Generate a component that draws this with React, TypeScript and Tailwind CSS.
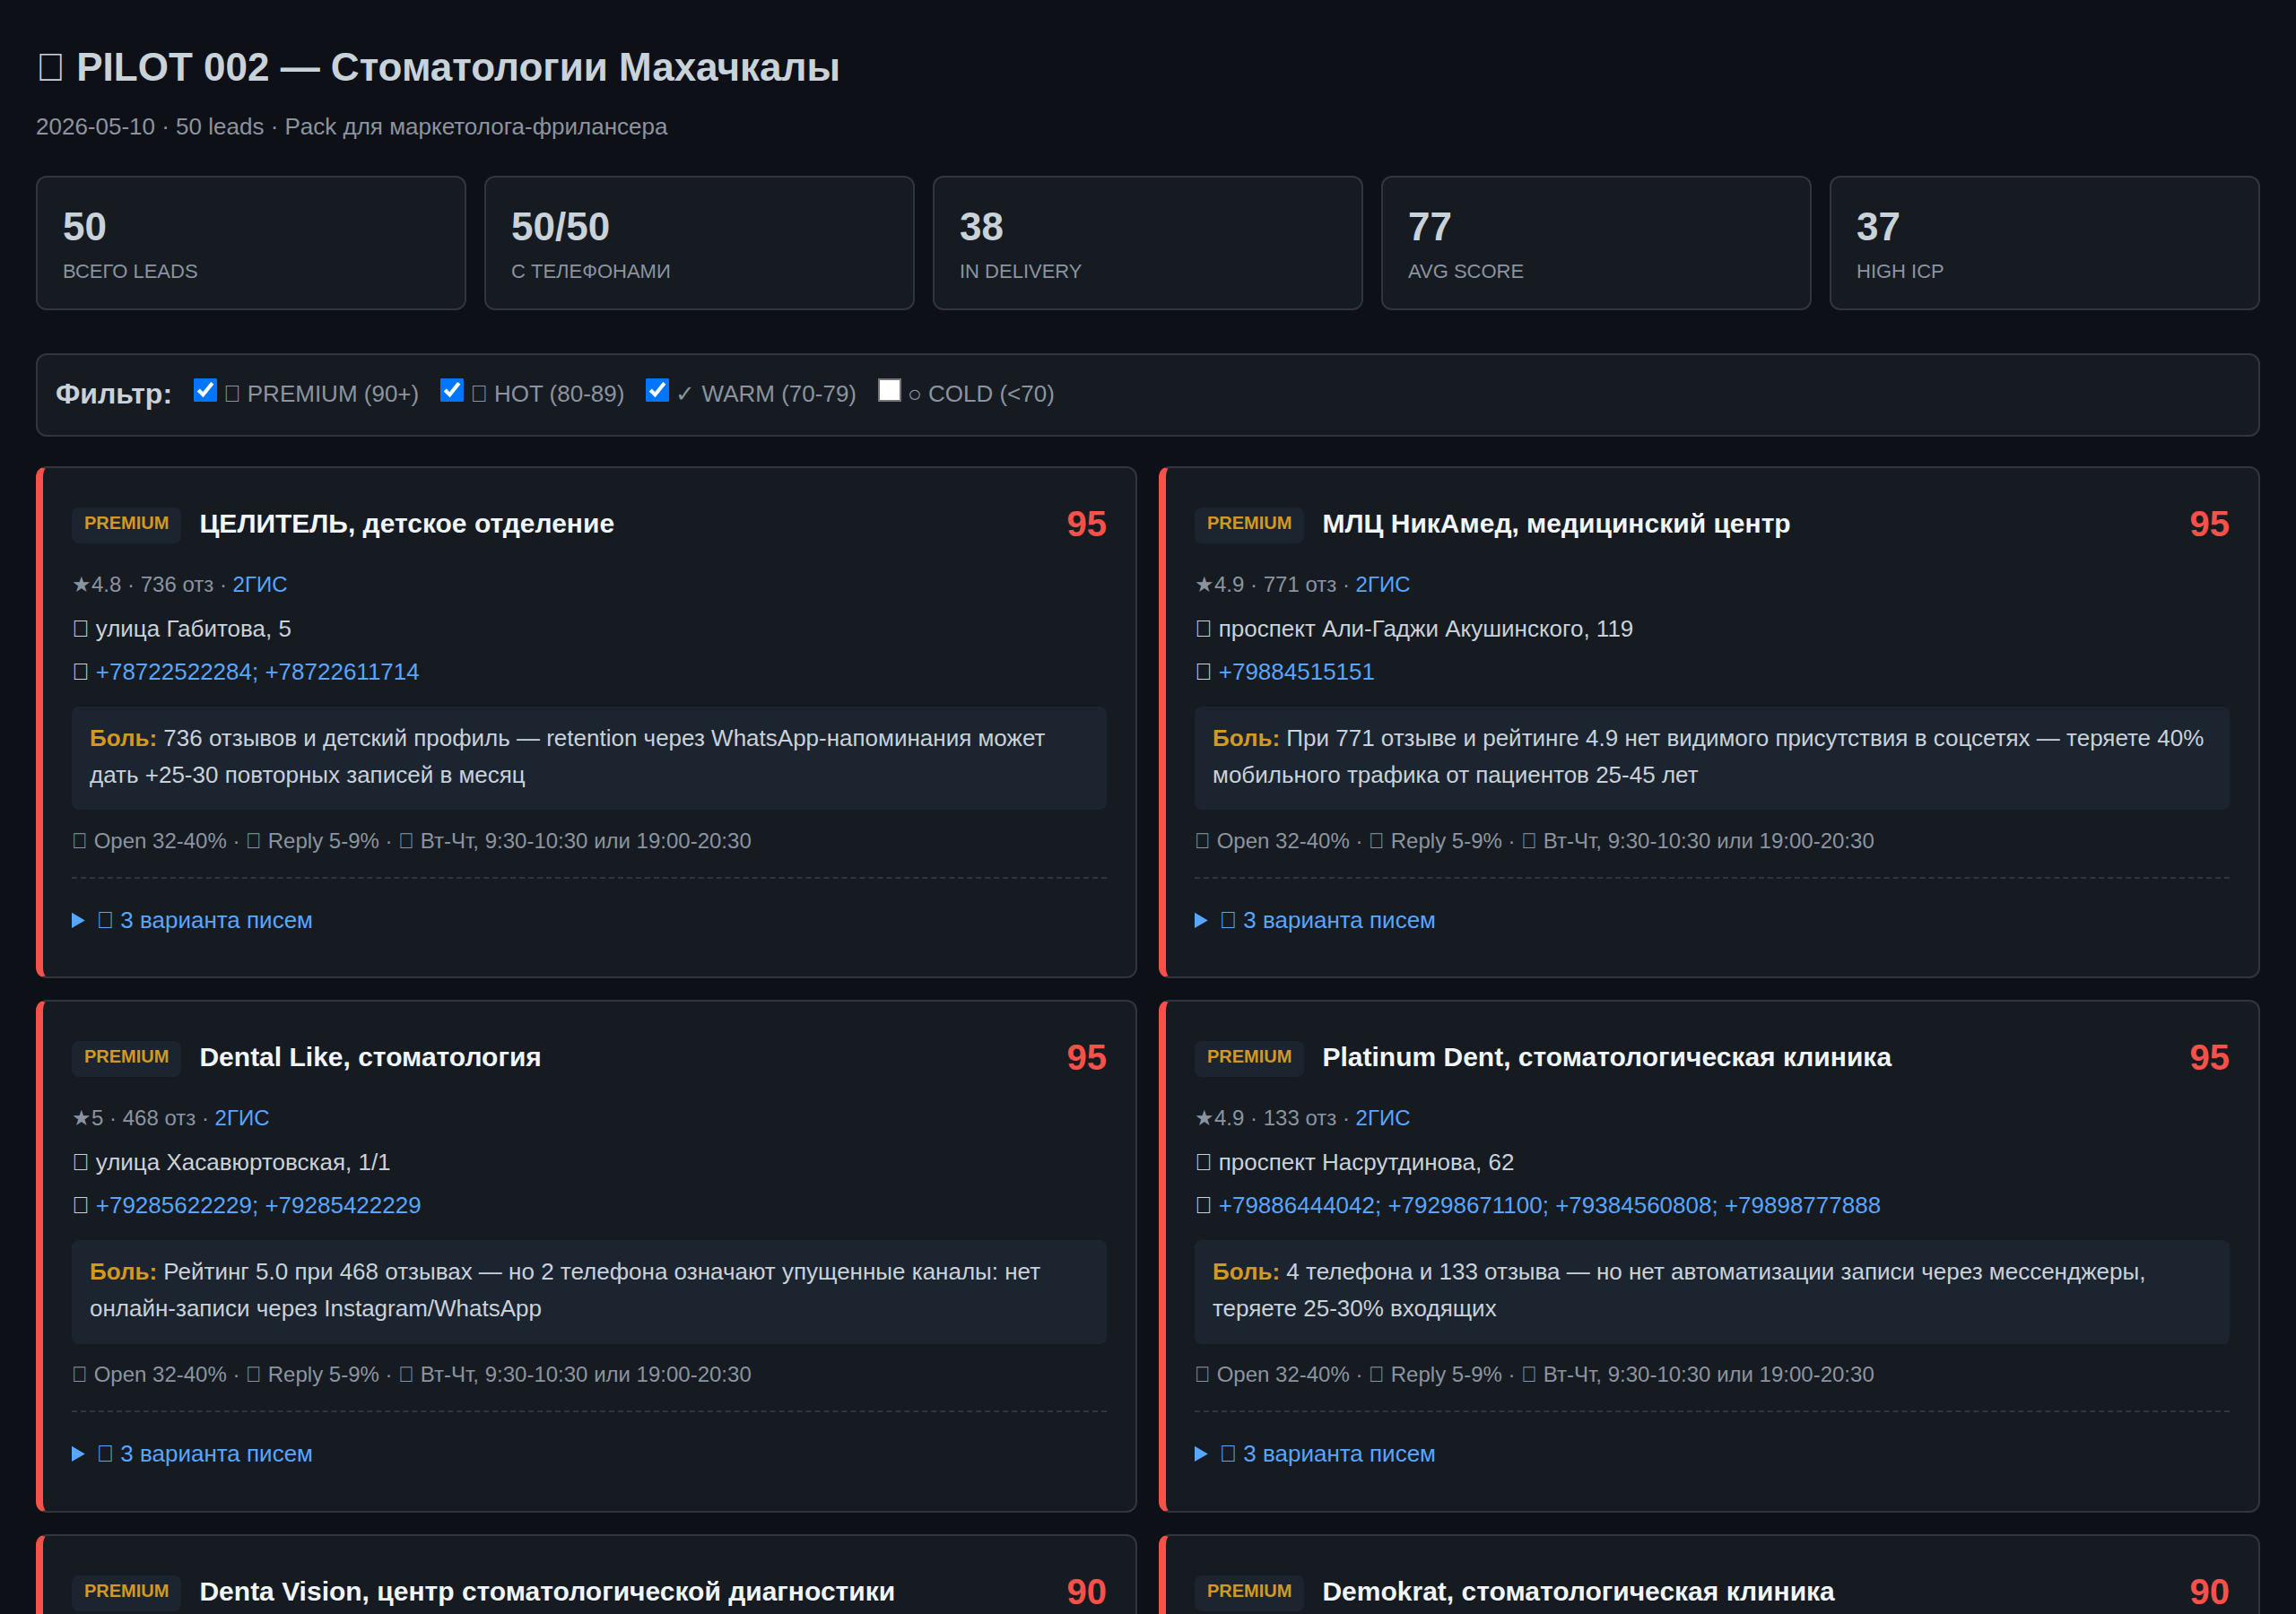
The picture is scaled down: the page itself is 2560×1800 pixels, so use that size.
const TOFU = '\uE000';

const leads = [
  {
    name: 'ЦЕЛИТЕЛЬ, детское отделение',
    score: 95,
    rating: '4.8',
    reviews: 736,
    address: 'улица Габитова, 5',
    phones: '+78722522284; +78722611714',
    pain: '736 отзывов и детский профиль — retention через WhatsApp-напоминания может дать +25-30 повторных записей в месяц',
  },
  {
    name: 'МЛЦ НикАмед, медицинский центр',
    score: 95,
    rating: '4.9',
    reviews: 771,
    address: 'проспект Али-Гаджи Акушинского, 119',
    phones: '+79884515151',
    pain: 'При 771 отзыве и рейтинге 4.9 нет видимого присутствия в соцсетях — теряете 40% мобильного трафика от пациентов 25-45 лет',
  },
  {
    name: 'Dental Like, стоматология',
    score: 95,
    rating: '5',
    reviews: 468,
    address: 'улица Хасавюртовская, 1/1',
    phones: '+79285622229; +79285422229',
    pain: 'Рейтинг 5.0 при 468 отзывах — но 2 телефона означают упущенные каналы: нет онлайн-записи через Instagram/WhatsApp',
  },
  {
    name: 'Platinum Dent, стоматологическая клиника',
    score: 95,
    rating: '4.9',
    reviews: 133,
    address: 'проспект Насрутдинова, 62',
    phones: '+79886444042; +79298671100; +79384560808; +79898777888',
    pain: '4 телефона и 133 отзыва — но нет автоматизации записи через мессенджеры, теряете 25-30% входящих',
  },
  {
    name: 'Denta Vision, центр стоматологической диагностики',
    score: 90,
    rating: '4.8',
    reviews: 214,
    address: 'улица Ирчи Казака, 31',
    phones: '+79285000000',
    pain: 'Нет онлайн-записи через мессенджеры',
  },
  {
    name: 'Demokrat, стоматологическая клиника',
    score: 90,
    rating: '4.9',
    reviews: 187,
    address: 'проспект Гамидова, 18',
    phones: '+79285111111',
    pain: 'Нет онлайн-записи через мессенджеры',
  },
];

const stats = [
  { value: '50', label: 'Всего leads' },
  { value: '50/50', label: 'С телефонами' },
  { value: '38', label: 'In delivery' },
  { value: '77', label: 'Avg score' },
  { value: '37', label: 'High ICP' },
];

const filters = [
  { label: `${TOFU} PREMIUM (90+)`, checked: true },
  { label: `${TOFU} HOT (80-89)`, checked: true },
  { label: '✓ WARM (70-79)', checked: true },
  { label: '○ COLD (<70)', checked: false },
];

function LeadCard({ lead }: { lead: (typeof leads)[number] }) {
  return (
    <div className="rounded-[12px] border-2 border-l-8 border-[#30363d] border-l-[#f85149] bg-[#161b22] px-[32px] pt-[30px] pb-[42px]">
      <div className="flex items-center justify-between">
        <div className="flex items-center gap-[20px]">
          <span className="mt-[4px] rounded-[8px] bg-[#1c2430] px-[14px] pt-[1px] pb-[7px] text-[20px] font-bold text-[#d29922]">PREMIUM</span>
          <span className="text-[30px] font-bold text-[#f0f6fc]">{lead.name}</span>
        </div>
        <span className="text-[40px] font-bold text-[#f85149]">{lead.score}</span>
      </div>
      <div className="mt-[16.5px] text-[24px] text-[#8b949e]">
        ★{lead.rating} · {lead.reviews} отз · <a className="text-[#58a6ff]">2ГИС</a>
      </div>
      <div className="mt-[10px] text-[26px] text-[#c9d1d9]">{TOFU} {lead.address}</div>
      <div className="mt-[6px] text-[26px] text-[#c9d1d9]">
        {TOFU} <a className="text-[#58a6ff]">{lead.phones}</a>
      </div>
      <div className="mt-[18px] rounded-[8px] bg-[#1c2430] px-[20px] pt-[14.5px] pb-[17.5px] text-[26px] text-[#c9d1d9]">
        <strong className="text-[#d29922]">Боль:</strong> {lead.pain}
      </div>
      <div className="mt-[15.5px] text-[24px] text-[#8b949e]">{TOFU} Open 32-40% · {TOFU} Reply 5-9% · {TOFU} Вт-Чт, 9:30-10:30 или 19:00-20:30</div>
      <details className="mt-[20.5px] border-t-2 border-dashed border-[#30363d] pt-[26px]">
        <summary className="text-[26px] text-[#58a6ff]">{TOFU} 3 варианта писем</summary>
      </details>
    </div>
  );
}

export default function App() {
  return (
    <div className="h-screen overflow-hidden bg-[#0d1117] px-[40px] pt-[40px] font-['Liberation_Sans',Arial,sans-serif] leading-[1.6] text-[#c9d1d9]">
      <h1 className="text-[44px] font-bold text-[#c9d1d9]">{TOFU} PILOT 002 — Стоматологии Махачкалы</h1>
      <p className="mt-[11px] text-[26px] text-[#8b949e]">2026-05-10 · 50 leads · Pack для маркетолога-фрилансера</p>

      <div className="mt-[33px] grid grid-cols-5 gap-[20px]">
        {stats.map((s) => (
          <div key={s.label} className="rounded-[12px] border-2 border-[#30363d] bg-[#161b22] px-[28px] pt-[26px] pb-[23.5px]">
            <div className="text-[44px] leading-[1.3] font-bold">{s.value}</div>
            <div className="mt-[4px] text-[22px] text-[#8b949e] uppercase">{s.label}</div>
          </div>
        ))}
      </div>

      <div className="mt-[48px] flex items-center gap-[24px] rounded-[12px] border-2 border-[#30363d] bg-[#161b22] px-[20px] pt-[18px] pb-[20px]">
        <strong className="text-[32px]">Фильтр:</strong>
        {filters.map((f) => (
          <label key={f.label} className="block text-[26px] text-[#8b949e]">
            <input
              type="checkbox"
              defaultChecked={f.checked}
              className={f.checked ? 'mr-[7px] h-[26px] w-[26px]' : 'mr-[7px] h-[26px] w-[26px] rounded-[5px] outline-2 outline-offset-[-2px] outline-[#767676]'}
            />
            {f.label}
          </label>
        ))}
      </div>

      <div className="mt-[33px] grid grid-cols-2 gap-[24px]">
        {leads.map((lead) => (
          <LeadCard key={lead.name} lead={lead} />
        ))}
      </div>
    </div>
  );
}
